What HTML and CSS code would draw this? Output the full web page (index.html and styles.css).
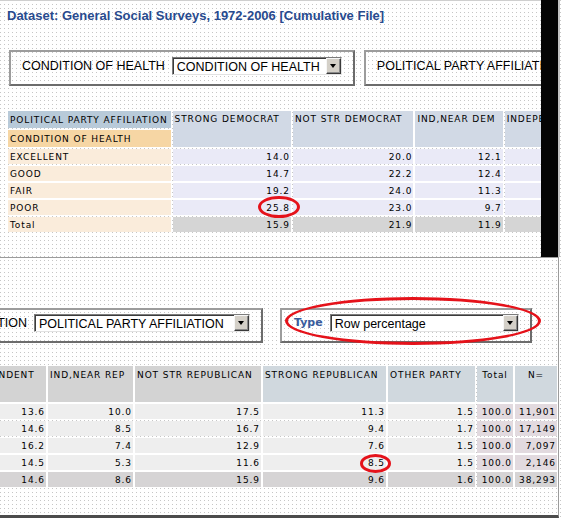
FILE: index.html
```html
<!DOCTYPE html>
<html lang="en">
<head>
<meta charset="utf-8">
<title>General Social Surveys crosstab</title>
<link rel="stylesheet" href="styles.css">
</head>
<body>
<div class="top">
  <div class="top-main">
    <h1 class="title">Dataset: General Social Surveys, 1972-2006 [Cumulative File]</h1>
    <div class="boxes boxes-top">
      <div class="box box-a">
        <span class="lbl">CONDITION OF HEALTH</span>
        <span class="select sel-a"><span class="sel-text">CONDITION OF HEALTH</span><span class="sel-btn"><i class="arrow"></i></span></span>
      </div>
      <div class="box box-b">
        <span class="lbl">POLITICAL PARTY AFFILIATION</span>
        <span class="select sel-b"><span class="sel-text">POLITICAL PARTY AFFILIATION</span><span class="sel-btn"><i class="arrow"></i></span></span>
      </div>
    </div>
    <table class="xtab xtab-top">
      <colgroup><col class="w162"><col class="w118"><col class="w120"><col class="w87"><col class="w88"></colgroup>
      <tr class="hr">
        <th class="hv-a">POLITICAL PARTY AFFILIATION</th>
        <th class="hc" rowspan="2">STRONG DEMOCRAT</th>
        <th class="hc" rowspan="2">NOT STR DEMOCRAT</th>
        <th class="hc" rowspan="2">IND,NEAR DEM</th>
        <th class="hc" rowspan="2">INDEPENDENT</th>
      </tr>
      <tr class="hr"><th class="hv-b">CONDITION OF HEALTH</th></tr>
      <tr><td class="lab">EXCELLENT</td><td class="num">14.0</td><td class="num">20.0</td><td class="num">12.1</td><td class="num">13.6</td></tr>
      <tr><td class="lab">GOOD</td><td class="num">14.7</td><td class="num">22.2</td><td class="num">12.4</td><td class="num">14.6</td></tr>
      <tr><td class="lab">FAIR</td><td class="num">19.2</td><td class="num">24.0</td><td class="num">11.3</td><td class="num">16.2</td></tr>
      <tr><td class="lab">POOR</td><td class="num marked">25.8<span class="mark mark-a"></span></td><td class="num">23.0</td><td class="num">9.7</td><td class="num">14.5</td></tr>
      <tr class="tot"><td class="lab">Total</td><td class="num">15.9</td><td class="num">21.9</td><td class="num">11.9</td><td class="num">14.6</td></tr>
    </table>
  </div>
  <div class="top-shadow"></div>
  <div class="top-edge"></div>
</div>
<div class="bottom">
  <div class="boxes boxes-bottom">
    <div class="box box-c">
      <span class="lbl">POLITICAL PARTY AFFILIATION</span>
      <span class="select sel-c"><span class="sel-text">POLITICAL PARTY AFFILIATION</span><span class="sel-btn"><i class="arrow"></i></span></span>
    </div>
    <div class="box box-d">
      <span class="type-lbl">Type</span>
      <span class="select sel-d"><span class="sel-text">Row percentage</span><span class="sel-btn"><i class="arrow"></i></span></span>
      <span class="mark mark-type"></span>
    </div>
  </div>
  <table class="xtab xtab-bottom">
    <colgroup><col class="w88"><col class="w85"><col class="w126"><col class="w123"><col class="w87"><col class="w36"><col class="w42"></colgroup>
    <tr class="hrow">
      <th class="hc g">INDEPENDENT</th>
      <th class="hc g">IND,NEAR REP</th>
      <th class="hc g">NOT STR REPUBLICAN</th>
      <th class="hc b">STRONG REPUBLICAN</th>
      <th class="hc b">OTHER PARTY</th>
      <th class="hc b ctr">Total</th>
      <th class="hc b ctr">N=</th>
    </tr>
    <tr><td class="num">13.6</td><td class="num">10.0</td><td class="num">17.5</td><td class="num">11.3</td><td class="num">1.5</td><td class="num p">100.0</td><td class="num p">11,901</td></tr>
    <tr><td class="num">14.6</td><td class="num">8.5</td><td class="num">16.7</td><td class="num">9.4</td><td class="num">1.7</td><td class="num p">100.0</td><td class="num p">17,149</td></tr>
    <tr><td class="num">16.2</td><td class="num">7.4</td><td class="num">12.9</td><td class="num">7.6</td><td class="num">1.5</td><td class="num p">100.0</td><td class="num p">7,097</td></tr>
    <tr><td class="num">14.5</td><td class="num">5.3</td><td class="num">11.6</td><td class="num marked">8.5<span class="mark mark-b"></span></td><td class="num">1.5</td><td class="num p">100.0</td><td class="num p">2,146</td></tr>
    <tr class="tot"><td class="num">14.6</td><td class="num">8.6</td><td class="num">15.9</td><td class="num">9.6</td><td class="num">1.6</td><td class="num p">100.0</td><td class="num p">38,293</td></tr>
  </table>
</div>
</body>
</html>
```

FILE: styles.css
```css
html, body {
  margin: 0;
  padding: 0;
}
body {
  width: 563px;
  height: 520px;
  overflow: hidden;
  background-color: #ffffff;
  background-image: conic-gradient(from 270deg at 1px 1px, #c6c6c6 25%, transparent 0);
  background-size: 4px 4px;
  font-family: "Liberation Sans", Arial, sans-serif;
  color: #000;
}

/* ---------- top window ---------- */
.top {
  display: flex;
  height: 257px;
}
.top-main {
  width: 541px;
  flex: none;
  overflow: hidden;
  box-sizing: border-box;
  border-top: 1px solid #cfcfcf;
}
.top-shadow {
  width: 17px;
  flex: none;
  background: #050505;
}
.top-edge {
  width: 2px;
  flex: none;
  background: #c4c4c4;
}
.title {
  margin: 8px 0 0 7px;
  font: bold 13px/14px "Liberation Sans", Arial, sans-serif;
  color: #284a8e;
  white-space: nowrap;
}

/* ---------- selector boxes ---------- */
.boxes {
  display: flex;
}
.boxes-top {
  margin: 27px 0 0 9px;
  gap: 9px;
}
.box {
  display: flex;
  align-items: flex-start;
  flex: none;
  box-sizing: border-box;
  border: 2px solid;
  border-color: #9c9c9c #6c6c6c #6c6c6c #9c9c9c;
  white-space: nowrap;
  position: relative;
}
.boxes-top .box {
  height: 36px;
  padding: 5px 11px 0 11px;
}
.box-b {
  width: 330px;
}
.lbl {
  font-size: 12.5px;
  line-height: 14px;
  margin: 2px 7px 0 0;
}
.type-lbl {
  font: bold 11px/13px "DejaVu Sans", Verdana, sans-serif;
  color: #3a5c9c;
  margin: 2px 7px 0 0;
}
.select {
  display: flex;
  align-items: stretch;
  flex: none;
  height: 18px;
  box-sizing: border-box;
  border: 1px solid;
  border-color: #7c7c7c #e2e2e2 #e2e2e2 #7c7c7c;
  box-shadow: inset 1px 1px 0 #3c3c3c;
  background: #fff;
  overflow: hidden;
}
.sel-a { width: 170px; }
.sel-b { width: 200px; }
.sel-c { width: 216px; }
.sel-d { width: 189px; }
.sel-text {
  flex: 1;
  padding: 2px 0 0 4px;
  font-size: 12.5px;
  line-height: 14px;
  white-space: nowrap;
  overflow: hidden;
}
.sel-btn {
  width: 15px;
  flex: none;
  box-sizing: border-box;
  margin-left: 2px;
  background: #d4d0c8;
  border: 1px solid;
  border-color: #f6f6f6 #3a3a3a #3a3a3a #f6f6f6;
  box-shadow: inset -1px -1px 0 #8a8a8a;
  display: flex;
  align-items: center;
  justify-content: center;
}
.arrow {
  display: block;
  width: 0;
  height: 0;
  border-left: 3px solid transparent;
  border-right: 3px solid transparent;
  border-top: 4px solid #000;
  margin: 0 1px 0 0;
}

/* ---------- crosstab tables ---------- */
.xtab {
  border-collapse: separate;
  border-spacing: 2px;
  table-layout: fixed;
  font-family: "DejaVu Sans", Verdana, sans-serif;
  font-size: 9px;
  line-height: 12px;
  letter-spacing: 0.9px;
  color: #000;
}
.xtab th, .xtab td {
  padding: 0;
  white-space: nowrap;
  overflow: hidden;
  font-weight: normal;
  text-align: left;
}
.w162 { width: 162px; }
.w118 { width: 118px; }
.w120 { width: 120px; }
.w87 { width: 87px; }
.w88 { width: 88px; }
.w85 { width: 85px; }
.w126 { width: 126px; }
.w123 { width: 123px; }
.w36 { width: 36px; }
.w42 { width: 42px; }

.xtab-top {
  width: 589px;
  margin: 23px 0 0 6px;
}
.xtab-top .hr th {
  height: 17px;
}
.xtab-top td {
  height: 15px;
}
.xtab .hv-a {
  background: #b8cad9;
  padding-left: 2px;
  vertical-align: middle;
}
.xtab .hv-b {
  background: #f6d6a4;
  padding-left: 2px;
  vertical-align: middle;
}
.xtab-top .hc {
  background: #d1d9e5;
  vertical-align: top;
  padding: 2px 0 0 2px;
}
.xtab .lab {
  background: #faecdb;
  padding-left: 2px;
}
.xtab-top .num {
  background: #eaeaf7;
}
.xtab .num {
  text-align: right;
  padding-right: 1px;
  vertical-align: middle;
}
.xtab-top .tot .num {
  background: #d5d5d5;
}

.xtab-bottom {
  width: 603px;
  margin: 21px 0 0 -44px;
}
.xtab-bottom .hrow th {
  height: 36px;
  box-sizing: border-box;
  vertical-align: top;
  padding: 3px 0 0 2px;
}
.xtab-bottom td {
  height: 15px;
}
.xtab-bottom .hc.g { background: #d3d3d3; }
.xtab-bottom .hc.b { background: #d0d8de; }
.xtab-bottom .hc.ctr { text-align: center; padding-left: 0; }
.xtab-bottom .num { background: #eeeeee; }
.xtab-bottom .num.p { background: #e2dadf; }
.xtab-bottom .tot .num { background: #d6d4d5; }

/* ---------- red annotation marks ---------- */
.marked {
  position: relative;
  overflow: visible !important;
}
.mark {
  position: absolute;
  box-sizing: border-box;
  border: 3px solid #e5121a;
  border-radius: 50%;
  pointer-events: none;
}
.mark-a {
  left: 85px;
  top: -4px;
  width: 42px;
  height: 22px;
}
.mark-b {
  left: 97px;
  top: -1px;
  width: 31px;
  height: 19px;
}
.mark-type {
  left: 3px;
  top: -13px;
  width: 256px;
  height: 48px;
}

/* ---------- bottom window ---------- */
.bottom {
  width: 559px;
  height: 261px;
  box-sizing: border-box;
  border-top: 1px solid #9c9c9c;
  border-right: 1px solid #9c9c9c;
  border-bottom: 3px solid #4c4c4c;
  overflow: hidden;
}
.boxes-bottom {
  margin: 50px 0 0 -300px;
  gap: 17px;
}
.boxes-bottom .box {
  height: 35px;
  padding-top: 4px;
}
.box-c {
  width: 563px;
  justify-content: flex-end;
  padding-right: 11px;
  border-left: none;
}
.box-d {
  width: 252px;
  padding-left: 12px;
}
```
